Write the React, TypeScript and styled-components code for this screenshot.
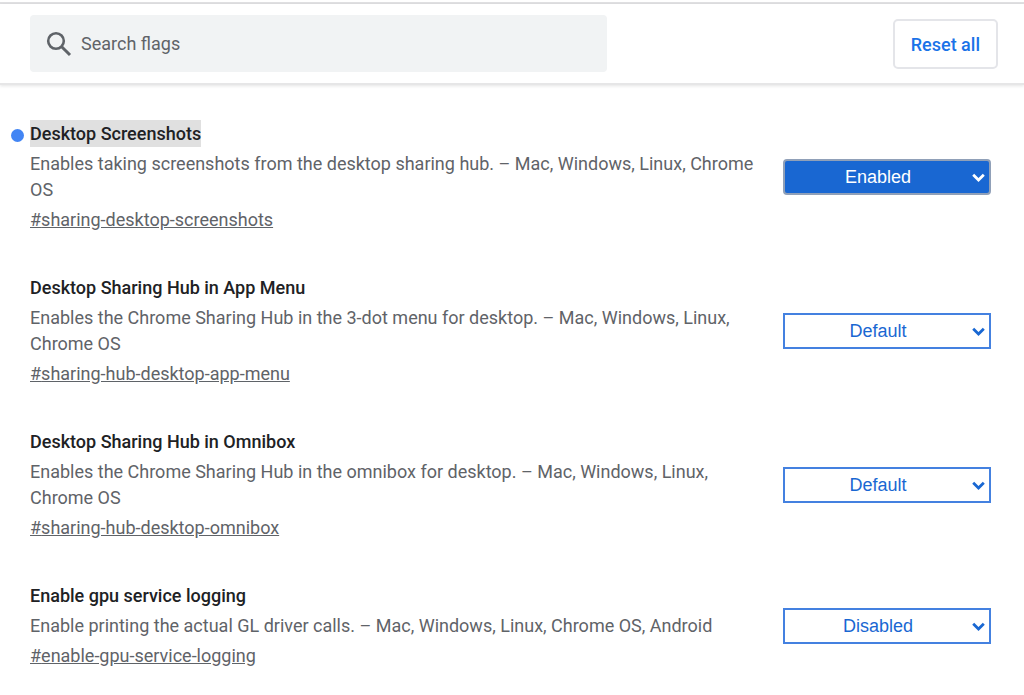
import React from "react";
import styled, { createGlobalStyle } from "styled-components";

const GlobalStyle = createGlobalStyle`
  *, *::before, *::after { box-sizing: border-box; }
  body {
    margin: 0;
    background: #fff;
    color: #202124;
    font-family: Roboto, "Liberation Sans", sans-serif;
    font-size: 18px;
    line-height: 26px;
  }
`;

const Page = styled.div`
  border-top: 2px solid #e0e0e2;
  margin-top: 2px;
`;

const Header = styled.header`
  display: flex;
  align-items: center;
  justify-content: space-between;
  gap: 24px;
  padding: 11px 26px 11px 30px;
  border-bottom: 2px solid #e6e6e7;
  box-shadow: 0 1px 3px rgba(60, 64, 67, 0.14);
`;

const SearchBox = styled.label`
  display: flex;
  flex: 0 1 577px;
  align-items: center;
  gap: 9px;
  height: 57px;
  padding: 0 16px;
  border-radius: 4px;
  background: #f1f3f4;
`;

const SearchInput = styled.input`
  flex: 1;
  min-width: 0;
  padding: 0;
  border: 0;
  outline: 0;
  background: transparent;
  color: #5f6368;
  font: inherit;

  &::placeholder {
    color: #5f6368;
    opacity: 1;
  }
`;

const ResetButton = styled.button`
  height: 50px;
  padding: 2px 16px 0;
  border: 2px solid #e4e5e9;
  border-radius: 5px;
  background: #fff;
  color: #1a73e8;
  font: inherit;
  font-weight: 500;
`;

const FlagList = styled.main`
  display: flex;
  flex-direction: column;
  gap: 41px;
  padding: 35px 33px 24px 30px;
`;

const FlagRow = styled.section`
  display: flex;
  align-items: center;
  gap: 24px;
`;

const FlagText = styled.div`
  flex: 1;
  min-width: 0;
`;

const FlagTitle = styled.h2<{ $changed: boolean }>`
  position: relative;
  width: fit-content;
  margin: 0 0 4px;
  background: ${(p) => (p.$changed ? "#e0e0e0" : "transparent")};
  font-size: 18px;
  font-weight: 500;
  line-height: 27px;

  &::before {
    content: "";
    display: ${(p) => (p.$changed ? "block" : "none")};
    position: absolute;
    top: 9px;
    left: -19px;
    width: 13px;
    height: 13px;
    border-radius: 50%;
    background: #4285f4;
  }
`;

const Description = styled.p`
  margin: 0 0 4px;
  color: #5f6368;
`;

const Permalink = styled.a`
  display: block;
  width: fit-content;
  color: #5f6368;
`;

const SelectWrap = styled.div<{ $changed: boolean }>`
  position: relative;
  flex: none;
  width: 208px;
  color: ${(p) => (p.$changed ? "#fff" : "#1967d2")};
`;

const FlagSelect = styled.select<{ $changed: boolean }>`
  display: block;
  width: 100%;
  height: 36px;
  padding: 0 20px 0 2px;
  appearance: none;
  border: 2px solid ${(p) => (p.$changed ? "#90a0b8" : "#4481e0")};
  border-radius: ${(p) => (p.$changed ? "4px" : "0")};
  background: ${(p) => (p.$changed ? "#1967d2" : "#fff")};
  color: inherit;
  font-family: "Liberation Sans", Arial, sans-serif;
  font-size: 18px;
  text-align: center;
  text-align-last: center;
`;

const Chevron = styled.svg`
  position: absolute;
  top: 14px;
  right: 6px;
  width: 13px;
  height: 10px;
  pointer-events: none;
`;

interface Flag {
  id: string;
  title: string;
  description: string;
  value: string;
  changed: boolean;
}

const flags: Flag[] = [
  {
    id: "sharing-desktop-screenshots",
    title: "Desktop Screenshots",
    description:
      "Enables taking screenshots from the desktop sharing hub. – Mac, Windows, Linux, Chrome OS",
    value: "Enabled",
    changed: true,
  },
  {
    id: "sharing-hub-desktop-app-menu",
    title: "Desktop Sharing Hub in App Menu",
    description:
      "Enables the Chrome Sharing Hub in the 3-dot menu for desktop. – Mac, Windows, Linux, Chrome OS",
    value: "Default",
    changed: false,
  },
  {
    id: "sharing-hub-desktop-omnibox",
    title: "Desktop Sharing Hub in Omnibox",
    description:
      "Enables the Chrome Sharing Hub in the omnibox for desktop. – Mac, Windows, Linux, Chrome OS",
    value: "Default",
    changed: false,
  },
  {
    id: "enable-gpu-service-logging",
    title: "Enable gpu service logging",
    description:
      "Enable printing the actual GL driver calls. – Mac, Windows, Linux, Chrome OS, Android",
    value: "Disabled",
    changed: false,
  },
];

function SearchIcon() {
  return (
    <svg width="26" height="26" viewBox="0 0 26 26" fill="none" stroke="#5f6368" aria-hidden="true">
      <circle cx="10" cy="10" r="7.8" strokeWidth="2.6" />
      <path d="M15.7 15.7L24 24" strokeWidth="3" />
    </svg>
  );
}

function FlagItem({ flag }: { flag: Flag }) {
  return (
    <FlagRow id={flag.id}>
      <FlagText>
        <FlagTitle id={`${flag.id}-title`} $changed={flag.changed}>
          {flag.title}
        </FlagTitle>
        <Description>{flag.description}</Description>
        <Permalink href={`#${flag.id}`}>#{flag.id}</Permalink>
      </FlagText>
      <SelectWrap $changed={flag.changed}>
        <FlagSelect
          aria-labelledby={`${flag.id}-title`}
          defaultValue={flag.value}
          $changed={flag.changed}
        >
          <option>Default</option>
          <option>Enabled</option>
          <option>Disabled</option>
        </FlagSelect>
        <Chevron viewBox="0 0 13 10" fill="none" stroke="currentColor" aria-hidden="true">
          <path d="M1.2 1.8L6.5 7L11.8 1.8" strokeWidth="2.8" />
        </Chevron>
      </SelectWrap>
    </FlagRow>
  );
}

export default function App() {
  return (
    <>
      <GlobalStyle />
      <Page>
        <Header>
          <SearchBox>
            <SearchIcon />
            <SearchInput type="text" placeholder="Search flags" aria-label="Search flags" />
          </SearchBox>
          <ResetButton type="button">Reset all</ResetButton>
        </Header>
        <FlagList>
          {flags.map((flag) => (
            <FlagItem key={flag.id} flag={flag} />
          ))}
        </FlagList>
      </Page>
    </>
  );
}
